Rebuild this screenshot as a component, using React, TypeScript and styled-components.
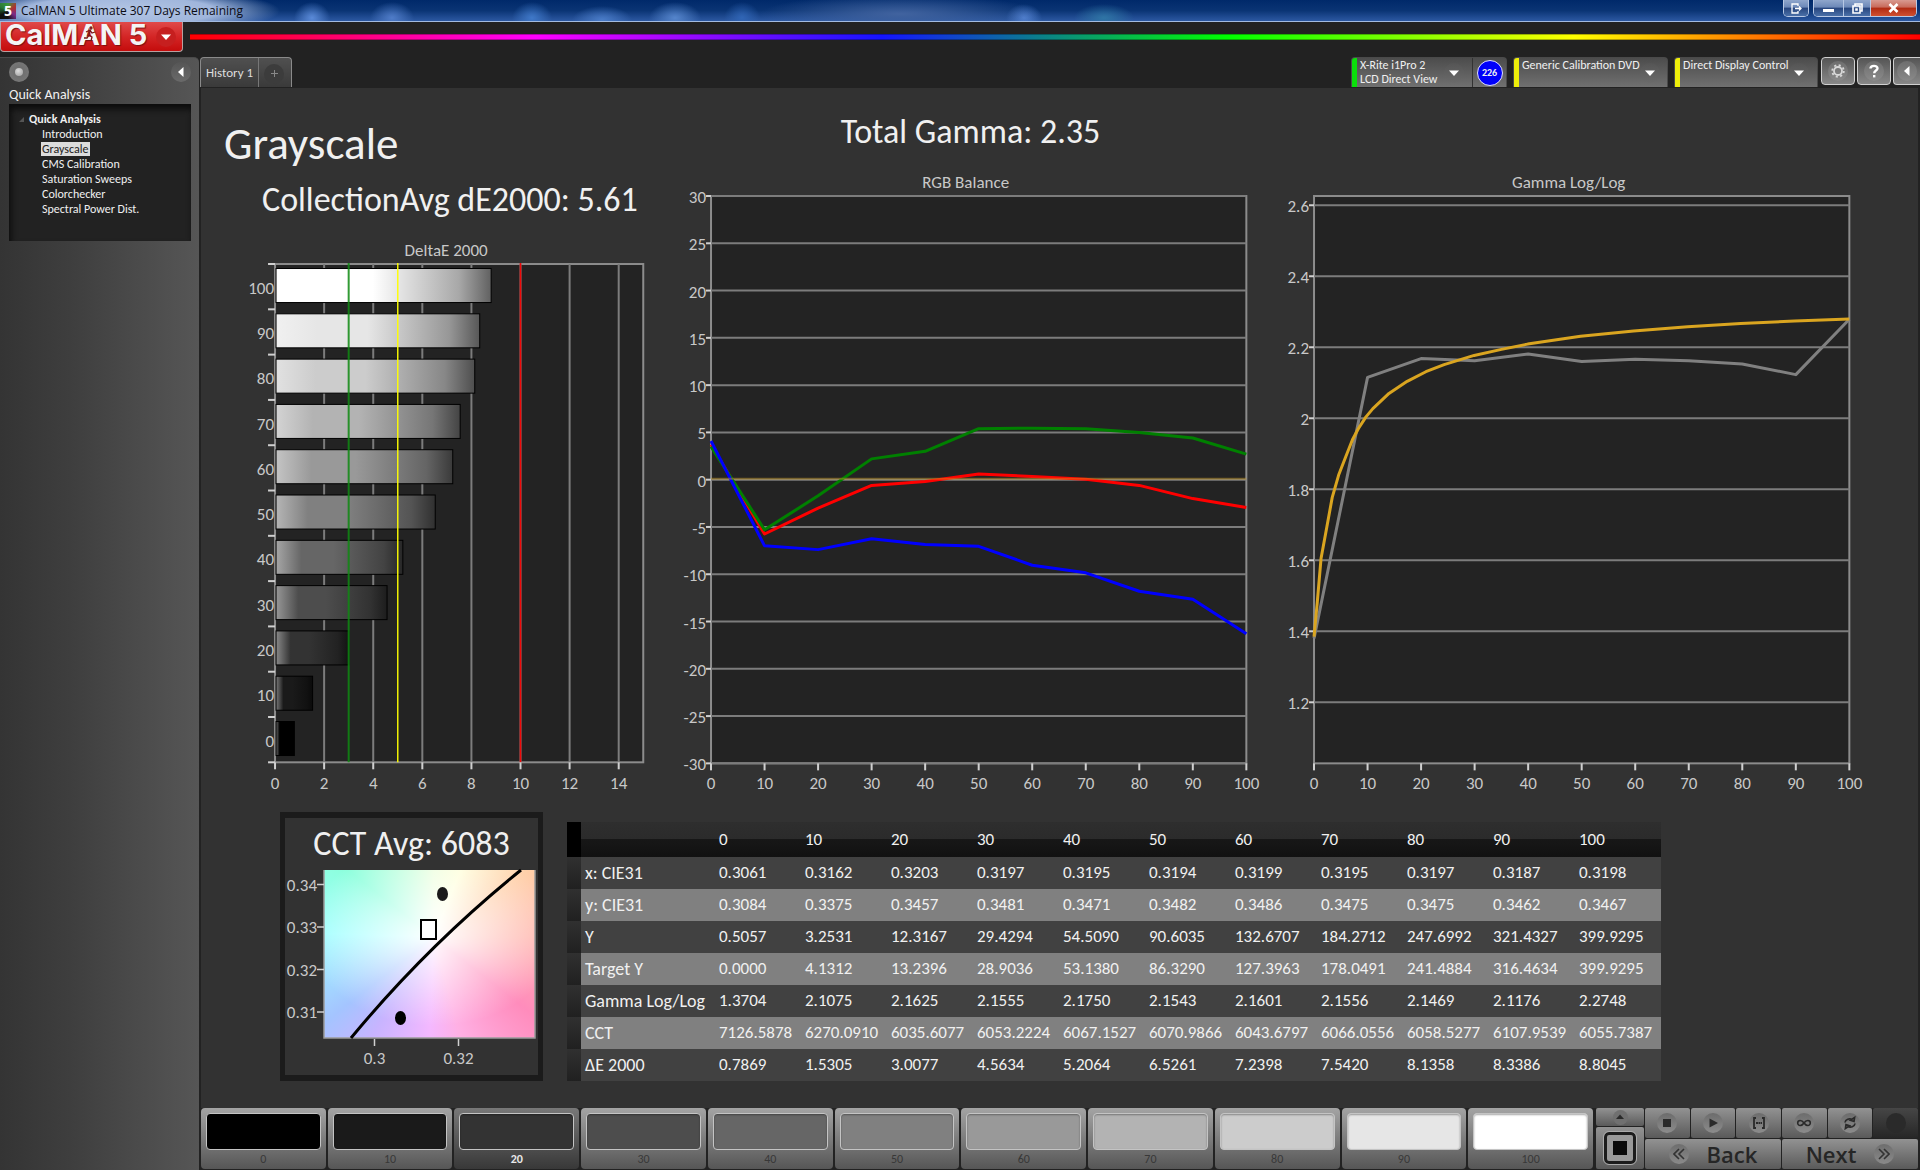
import React from "react";
import styled, { createGlobalStyle, css } from "styled-components";

const GlobalStyle = createGlobalStyle`
  *, *::before, *::after { box-sizing: border-box; }
  body {
    margin: 0;
    background: #222;
    color: #f0f0f0;
    font-family: Carlito, Calibri, Lato, "Open Sans", sans-serif;
    font-size: 12px;
  }
  button { font: inherit; color: inherit; border: 0; padding: 0; margin: 0; background: none; cursor: pointer; }
  h1, h2, p, figure, ul { margin: 0; padding: 0; font-weight: 400; }
  ul { list-style: none; }
  svg { display: block; }
`;

/* ---------- shell ---------- */

const Shell = styled.div`
  min-height: 100vh;
  display: grid;
  grid-template-rows: 22px 35px 1fr;
  background: #222;
  overflow: hidden;
`;

const TitleBar = styled.header`
  display: flex;
  align-items: flex-start;
  justify-content: space-between;
  border-bottom: 1px solid #a3bbe0;
  background:
    radial-gradient(ellipse 160px 24px at 120px 11px, #b4c6e4 0%, #a0b6dc 60%, transparent 100%),
    radial-gradient(ellipse 18px 16px at 312px 18px, #5a8ad8 0%, transparent 100%),
    radial-gradient(ellipse 22px 16px at 392px 18px, #4f7cc8 0%, transparent 100%),
    radial-gradient(ellipse 20px 16px at 532px 18px, #3f78c8 0%, transparent 100%),
    radial-gradient(ellipse 30px 14px at 602px 20px, #4a7cc8 0%, transparent 100%),
    radial-gradient(ellipse 26px 16px at 675px 18px, #5585cc 0%, transparent 100%),
    radial-gradient(ellipse 18px 16px at 742px 18px, #3065b5 0%, transparent 100%),
    radial-gradient(ellipse 140px 20px at 900px 14px, #41639f 0%, transparent 100%),
    radial-gradient(ellipse 18px 14px at 1024px 18px, #5080d0 0%, transparent 100%),
    radial-gradient(ellipse 30px 14px at 1104px 18px, #2f75a5 0%, transparent 100%),
    linear-gradient(#00296a, #0a3474 50%, #2c58a2);
`;

const AppTitle = styled.div`
  display: flex;
  align-items: center;
  gap: 5px;
  height: 21px;
  color: #0b0b14;
  font-family: "Open Sans", sans-serif;
  font-size: 12px;
`;

const AppBadge = styled.span`
  display: grid;
  place-items: center;
  width: 16px;
  height: 16px;
  color: #fff;
  font-size: 14px;
  line-height: 16px;
  font-weight: 700;
  background: conic-gradient(#3c9a3c, #b03030, #7a2a8a, #101010, #101010, #2a7a3a, #3c9a3c);
`;

const WindowButtons = styled.div`
  display: flex;
  gap: 4px;
  padding-right: 3px;
`;

const WindowGroup = styled.div`
  display: flex;
  height: 17px;
  border: 1px solid #b8c8e4;
  border-top: 0;
  border-radius: 0 0 5px 5px;
  overflow: hidden;
`;

const WindowButton = styled.button<{ $w: number; $close?: boolean }>`
  display: grid;
  place-items: center;
  width: ${(p) => p.$w}px;
  background: ${(p) =>
    p.$close
      ? "linear-gradient(#d89a90, #c86a5a 45%, #b02a12 50%, #d05030)"
      : "linear-gradient(#8fa6cc, #6c88b8 45%, #27457e 50%, #4a70a8)"};
  & + & { border-left: 1px solid #b8c8e4; }
`;

const BrandRow = styled.div`
  display: flex;
  align-items: flex-start;
  gap: 7px;
`;

const Brand = styled.button`
  position: relative;
  display: flex;
  align-items: center;
  justify-content: space-between;
  width: 183px;
  height: 30px;
  padding: 0 6px 0 4px;
  border: 1px solid #b9a0a0;
  border-top: 0;
  border-radius: 0 0 4px 4px;
  background: linear-gradient(#e04a4a, #d42626 50%, #c40c0c);
`;

const BrandName = styled.span`
  color: #f4f4f4;
  font-family: Inter, "Open Sans", sans-serif;
  font-size: 29px;
  line-height: 26px;
  font-weight: 700;
  padding-bottom: 4px;
  text-shadow: 1px 1px 1px #7a1010;
`;

const BrandFigure = styled.svg`
  position: absolute;
  left: 83px;
  top: 4px;
`;

const Spectrum = styled.div`
  flex: 1;
  height: 6px;
  margin-top: 12px;
  border: solid rgba(0, 0, 0, 0.3);
  border-width: 1px 0;
  background: linear-gradient(90deg, #f00, #f0f 20%, #1414ff 40%, #0f0 60%, #ff0 80%, #f00);
`;

const Disc = styled.span<{ $size: number; $bg?: string }>`
  display: grid;
  place-items: center;
  flex: none;
  width: ${(p) => p.$size}px;
  height: ${(p) => p.$size}px;
  border-radius: 50%;
  background: ${(p) => p.$bg ?? "linear-gradient(#6e6e6e, #8a8a8a)"};
`;

const Body = styled.div`
  display: grid;
  grid-template-columns: 199px minmax(0, 1fr);
  gap: 1px;
`;

/* ---------- sidebar ---------- */

const Sidebar = styled.aside`
  padding: 4px 8px 0 9px;
  border-top: 1px solid #4a4a4a;
  border-radius: 0 5px 0 0;
  background: linear-gradient(90deg, #343434, #3e3e3e 35%, #565656);
`;

const SidebarTools = styled.div`
  display: flex;
  justify-content: space-between;
`;

const SidebarTitle = styled.p`
  padding-top: 4px;
  font-size: 14px;
  line-height: 18px;
`;

const Tree = styled.nav`
  height: 137px;
  padding: 7px 10px;
  background: #222;
  box-shadow: inset 2px 5px 6px #0c0c0c;
`;

const TreeRoot = styled.div`
  display: flex;
  align-items: center;
  gap: 5px;
  height: 16px;
  font-weight: 700;
`;

const TreeItem = styled.li`
  height: 15px;
  padding-left: 22px;
  line-height: 14px;
`;

const TreeLink = styled.a<{ $active?: boolean }>`
  display: inline-block;
  padding: 0 1px;
  color: ${(p) => (p.$active ? "#222" : "#f0f0f0")};
  background: ${(p) => (p.$active ? "#dcdcdc" : "none")};
  text-decoration: none;
`;

/* ---------- workspace header ---------- */

const Workspace = styled.div`
  display: flex;
  flex-direction: column;
  min-width: 0;
`;

const TopRow = styled.div`
  display: flex;
  justify-content: space-between;
  height: 31px;
`;

const Tabs = styled.div`
  display: flex;
  height: 30px;
  border: 1px solid #8a8a8a;
  border-bottom: 0;
  border-radius: 4px 4px 0 0;
  background: linear-gradient(#505050, #3a3a3a);
`;

const Tab = styled.button`
  display: flex;
  align-items: center;
  padding: 0 5px;
  color: #ddd;
  font-size: 13px;
  & + & { padding: 2px 7px 0 5px; border-left: 1px solid #777; }
`;

const Devices = styled.div`
  display: flex;
  overflow: hidden;
`;

const Device = styled.div<{ $w: number }>`
  display: flex;
  width: ${(p) => p.$w}px;
  height: 30px;
  margin-right: 6px;
  border: 1px solid #4a4a4a;
  border-bottom: 0;
  border-radius: 4px 4px 0 0;
  overflow: hidden;
  background: linear-gradient(#4c4c4c, #707070);
`;

const DeviceButton = styled.button<{ $stripe: string }>`
  display: flex;
  flex: 1;
  align-items: flex-start;
  justify-content: space-between;
  padding: 0 8px 0 3px;
  border-left: 5px solid ${(p) => p.$stripe};
  text-align: left;
  line-height: 14px;
  white-space: pre;
  ${Disc} { margin-top: 5px; }
`;

const MeterId = styled.button`
  display: grid;
  place-items: center;
  width: 34px;
  border-left: 1px solid #333;
`;

const MeterBadge = styled.span`
  display: grid;
  place-items: center;
  width: 26px;
  height: 26px;
  border: 1px solid #e0e0ff;
  border-radius: 50%;
  background: #0000fa;
  font-size: 10px;
  font-weight: 700;
`;

const SquareButton = styled.button<{ $cut?: boolean }>`
  display: grid;
  place-items: center;
  width: ${(p) => (p.$cut ? 27 : 34)}px;
  height: 28px;
  border: 1px solid #d0d0d0;
  border-radius: ${(p) => (p.$cut ? "4px 0 0 4px" : "4px")};
  ${(p) => p.$cut && css`border-right: 0;`}
  background: linear-gradient(#555, #888);
`;

const ToolButtons = styled.div`
  display: flex;
  gap: 2px;
  margin-left: -3px;
`;

/* ---------- dashboard ---------- */

const Dashboard = styled.main`
  flex: 1;
  display: flex;
  flex-direction: column;
  margin-right: 2px;
  background: #323232;
  border-left: 1px solid #222;
`;

const Charts = styled.section`
  display: grid;
  grid-template-columns: 436fr 584fr 584fr;
  gap: 18px;
  padding: 16px 53px 0 23px;
`;

const Headline = styled.h1`
  margin-top: 12px;
  font-size: 45px;
  line-height: 56px;
`;

const Stat = styled.h2<{ $indent?: number; $center?: boolean }>`
  padding-left: ${(p) => p.$indent ?? 0}px;
  font-size: 34px;
  line-height: 56px;
  text-align: ${(p) => (p.$center ? "center" : "left")};
  white-space: nowrap;
`;

const PanelStat = styled(Stat)`
  line-height: 52px;
`;

const GraphFigure = styled.figure<{ $top: number }>`
  padding-top: ${(p) => p.$top}px;
`;

const Graph = styled.svg`
  width: 100%;
  height: auto;
  overflow: visible;
  font-size: 17px;
  fill: #c8c8c8;
`;

const Readings = styled.section`
  display: grid;
  grid-template-columns: 263px minmax(0, 1094px);
  gap: 24px;
  align-items: end;
  padding: 12px 24px 26px 79px;
`;

const CctPanel = styled.section`
  border: solid #1b1b1b;
  border-width: 6px 5px;
`;

const CieField = styled.div`
  width: 100%;
  height: 100%;
  background:
    radial-gradient(ellipse 60% 55% at 52% 38%, rgba(255, 255, 255, 1) 0%, rgba(255, 255, 255, 0.5) 50%, transparent 100%),
    conic-gradient(from 0deg at 52% 40%,
      #ecffdc 0deg, #ffffd8 22deg, #ffcfa8 55deg, #ffb4ac 90deg, #ff8cbc 128deg,
      #ffb0e4 165deg, #f4b8ff 182deg, #c8b4ff 212deg, #a4c4ff 232deg, #a0ffff 272deg, #8cffdc 308deg, #ecffdc 360deg);
`;

const DataTable = styled.table`
  width: 100%;
  table-layout: fixed;
  border-collapse: collapse;
  font-size: 17px;
  line-height: 20px;
  th, td { padding: 0 0 0 4px; font-weight: 400; text-align: left; white-space: nowrap; }
  thead tr { height: 35px; background: linear-gradient(#2e2e2e 0, #2b2b2b 48%, #171717 50%, #111); }
  tbody tr { height: 32px; background: #414141; }
  tbody tr:nth-child(even) { background: #808080; }
  tbody th { font-size: 18px; }
  td:first-child { background: linear-gradient(#303030, #202020); }
  thead td:first-child { background: #000; }
`;

/* ---------- bottom strip ---------- */

const Strip = styled.footer`
  display: flex;
  gap: 1px;
  height: 62px;
  margin-top: auto;
  padding-bottom: 1px;
  background: #222;
`;

const Swatches = styled.div`
  flex: 1;
  display: grid;
  grid-template-columns: repeat(11, 1fr);
  gap: 2px;
  padding-right: 2px;
`;

const SwatchButton = styled.button<{ $active?: boolean }>`
  display: flex;
  flex-direction: column;
  padding: 5px 5px 0;
  border-radius: 4px;
  color: ${(p) => (p.$active ? "#e8e8e8" : "#383838")};
  font-weight: ${(p) => (p.$active ? 700 : 400)};
  background: ${(p) => (p.$active ? "linear-gradient(#787878, #383838)" : "linear-gradient(#a4a4a4, #565656)")};
`;

const SwatchColor = styled.span<{ $level: number }>`
  display: block;
  width: 100%;
  height: 37px;
  border: 1px solid #c4c4c4;
  border-radius: 4px;
  background: rgb(${(p) => p.$level}, ${(p) => p.$level}, ${(p) => p.$level});
  box-shadow: inset 0 1px 2px rgba(0, 0, 0, 0.35);
`;

const SwatchLabel = styled.span`
  width: 100%;
  line-height: 18px;
  text-align: center;
`;

const PatternColumn = styled.div`
  display: grid;
  grid-template-rows: 18px 1fr;
  gap: 1px;
  width: 48px;
`;

const MetalButton = styled.button<{ $dark?: boolean }>`
  display: flex;
  align-items: center;
  justify-content: center;
  border-radius: 2px;
  background: ${(p) => (p.$dark ? "linear-gradient(#464646, #262626)" : "linear-gradient(#929292, #5a5a5a)")};
`;

const PatternFrame = styled.span`
  display: grid;
  place-items: center;
  width: 32px;
  height: 32px;
  border: 3px solid #1c1c1c;
  border-radius: 5px;
  outline: 1px solid #aaa;
  background: #999;
`;

const Controls = styled.div`
  display: grid;
  grid-template-rows: 30px 1fr;
  gap: 1px;
  width: 273px;
`;

const ControlRow = styled.div<{ $n: number }>`
  display: grid;
  grid-template-columns: repeat(${(p) => p.$n}, 1fr);
  gap: 1px;
`;

const StepButton = styled(MetalButton)`
  gap: 18px;
  color: #262626;
  font-family: "Open Sans", "Noto Sans", sans-serif;
  font-size: 22px;
  line-height: 28px;
  font-weight: 600;
`;

/* ---------- data ---------- */

const LEVELS = [0, 10, 20, 30, 40, 50, 60, 70, 80, 90, 100];

const ROWS: [string, string[]][] = [
  ["x: CIE31", ["0.3061", "0.3162", "0.3203", "0.3197", "0.3195", "0.3194", "0.3199", "0.3195", "0.3197", "0.3187", "0.3198"]],
  ["y: CIE31", ["0.3084", "0.3375", "0.3457", "0.3481", "0.3471", "0.3482", "0.3486", "0.3475", "0.3475", "0.3462", "0.3467"]],
  ["Y", ["0.5057", "3.2531", "12.3167", "29.4294", "54.5090", "90.6035", "132.6707", "184.2712", "247.6992", "321.4327", "399.9295"]],
  ["Target Y", ["0.0000", "4.1312", "13.2396", "28.9036", "53.1380", "86.3290", "127.3963", "178.0491", "241.4884", "316.4634", "399.9295"]],
  ["Gamma Log/Log", ["1.3704", "2.1075", "2.1625", "2.1555", "2.1750", "2.1543", "2.1601", "2.1556", "2.1469", "2.1176", "2.2748"]],
  ["CCT", ["7126.5878", "6270.0910", "6035.6077", "6053.2224", "6067.1527", "6070.9866", "6043.6797", "6066.0556", "6058.5277", "6107.9539", "6055.7387"]],
  ["ΔE 2000", ["0.7869", "1.5305", "3.0077", "4.5634", "5.2064", "6.5261", "7.2398", "7.5420", "8.1358", "8.3386", "8.8045"]],
];

const DELTA_E = ROWS[6][1].map(Number);

const RED = [3.7, -5.75, -3, -0.6, -0.2, 0.6, 0.35, 0.05, -0.6, -2, -2.95];
const GREEN = [3.5, -5.3, -1.7, 2.2, 3, 5.4, 5.45, 5.4, 5, 4.4, 2.7];
const BLUE = [4.1, -7, -7.4, -6.25, -6.85, -7.05, -9.05, -9.85, -11.8, -12.65, -16.3];

const GAMMA = [1.38, 2.115, 2.168, 2.162, 2.181, 2.16, 2.166, 2.162, 2.153, 2.123, 2.279];
const GAMMA_TARGET: [number, number][] = [
  [0, 1.385], [0.6, 1.48], [1.3, 1.605], [2.4, 1.694], [3.4, 1.777], [4.6, 1.84], [5.9, 1.891], [7.2, 1.94],
  [8.3, 1.971], [9.7, 2.004], [11, 2.027], [14, 2.07], [17.4, 2.104], [20.9, 2.131], [24.3, 2.151], [29.9, 2.177],
  [35, 2.194], [39.9, 2.209], [49.8, 2.231], [59.7, 2.246], [69.8, 2.258], [79.7, 2.267], [89.8, 2.274], [100, 2.28],
];

const gray = (v: number) => `rgb(${Math.round(v)},${Math.round(v)},${Math.round(v)})`;
const points = (list: [number, number][]) => list.map(([x, y]) => `${x.toFixed(1)},${y.toFixed(1)}`).join(" ");

/* ---------- charts ---------- */

function DeltaChart() {
  const left = 51, right = 419, top = 28, bottom = 526;
  const sx = (v: number) => left + (v * (right - left)) / 15;
  const band = (bottom - top) / 11;
  return (
    <Graph viewBox="0 0 436 564" role="img" aria-label="DeltaE 2000">
      <defs>
        {LEVELS.map((l) => {
          const b = (l / 100) * 255;
          return (
            <linearGradient key={l} id={`bar${l}`}>
              <stop offset="0" stopColor={gray(b + (255 - b) * 0.42)} />
              <stop offset="0.2" stopColor={gray(b)} />
              <stop offset="0.45" stopColor={gray(b)} />
              <stop offset="0.85" stopColor={gray(b * 0.66)} />
              <stop offset="1" stopColor={gray(b * 0.38)} />
            </linearGradient>
          );
        })}
      </defs>
      <text x="222" y="20" textAnchor="middle">DeltaE 2000</text>
      <rect x={left} y={top} width={right - left} height={bottom - top} fill="#232323" stroke="#8c8c8c" strokeWidth="2" />
      {[2, 4, 6, 8, 10, 12, 14].map((v) => (
        <line key={v} x1={sx(v)} x2={sx(v)} y1={top} y2={bottom} stroke="#7c7c7c" strokeWidth="2" />
      ))}
      {LEVELS.map((l, i) => {
        const y = bottom - (i + 1) * band;
        return (
          <g key={l}>
            <rect x={left + 1} y={y + 4.5} width={sx(DELTA_E[i]) - left - 1} height="34" fill={`url(#bar${l})`} stroke="#000" />
            <text x={left - 1} y={y + band / 2 + 7} textAnchor="end">{l}</text>
          </g>
        );
      })}
      {Array.from({ length: 12 }, (_, i) => (
        <line key={i} x1={left - 7} x2={left} y1={top + i * band} y2={top + i * band} stroke="#d0d0d0" strokeWidth="2" />
      ))}
      <line x1={sx(3)} x2={sx(3)} y1={top - 1} y2={bottom} stroke="#0f8a12" strokeWidth="2" opacity="0.85" />
      <line x1={sx(5)} x2={sx(5)} y1={top - 1} y2={bottom} stroke="#ff0" strokeWidth="1.4" />
      <line x1={sx(10)} x2={sx(10)} y1={top - 1} y2={bottom} stroke="#f00808" strokeWidth="1.6" />
      {[0, 2, 4, 6, 8, 10, 12, 14].map((v) => (
        <g key={v}>
          <line x1={sx(v)} x2={sx(v)} y1={bottom} y2={bottom + 7} stroke="#d0d0d0" strokeWidth="2" />
          <text x={sx(v)} y={bottom + 27} textAnchor="middle">{v}</text>
        </g>
      ))}
    </Graph>
  );
}

interface LineChartProps {
  title: string;
  min: number;
  max: number;
  ticks: number[];
  series: { color: string; data: [number, number][] }[];
  baseline?: boolean;
}

function LineChart({ title, min, max, ticks, series, baseline }: LineChartProps) {
  const left = 33, right = 568, top = 24, bottom = 591;
  const sx = (v: number) => left + (v * (right - left)) / 100;
  const sy = (v: number) => bottom - ((v - min) * (bottom - top)) / (max - min);
  return (
    <Graph viewBox="0 0 584 628" role="img" aria-label={title}>
      <text x={(left + right) / 2 - 13} y="16" textAnchor="middle">{title}</text>
      <rect x={left} y={top} width={right - left} height={bottom - top} fill="#232323" stroke="#8c8c8c" strokeWidth="2" />
      {ticks.map((v) => (
        <g key={v}>
          <line x1={left} x2={right} y1={sy(v)} y2={sy(v)} stroke="#7c7c7c" strokeWidth="2" />
          <line x1={left - 5} x2={left} y1={sy(v)} y2={sy(v)} stroke="#d0d0d0" strokeWidth="2" />
          <text x={left - 5} y={sy(v) + 7} textAnchor="end">{v}</text>
        </g>
      ))}
      {LEVELS.map((v) => (
        <g key={v}>
          <line x1={sx(v)} x2={sx(v)} y1={bottom} y2={bottom + 7} stroke="#d0d0d0" strokeWidth="2" />
          <text x={sx(v)} y={bottom + 26} textAnchor="middle">{v}</text>
        </g>
      ))}
      {series.map((s) => (
        <polyline
          key={s.color}
          points={points(s.data.map(([x, y]) => [sx(x), sy(y)] as [number, number]))}
          fill="none"
          stroke={s.color}
          strokeWidth="3"
          strokeLinejoin="round"
        />
      ))}
      {baseline && <line x1={left} x2={right} y1={sy(0) - 1} y2={sy(0) - 1} stroke="#daa520" strokeWidth="2" opacity="0.4" />}
    </Graph>
  );
}

const byLevel = (values: number[]) => values.map((v, i) => [LEVELS[i], v] as [number, number]);

function CctChart() {
  return (
    <Graph viewBox="0 0 253 205" role="img" aria-label="CCT chromaticity">
      <foreignObject x="39" y="0" width="211" height="168">
        <CieField />
      </foreignObject>
      <path d="M39 0V168H250V0" fill="none" stroke="#9a9a9a" strokeWidth="1.5" />
      <path d="M66 168Q142 76 236 0" fill="none" stroke="#000" strokeWidth="3" />
      <ellipse cx="157.5" cy="24" rx="5.5" ry="7" fill="#1a1a1a" />
      <ellipse cx="115.5" cy="148" rx="5.5" ry="7" fill="#000" />
      <rect x="136" y="50" width="15" height="19" fill="#fff" stroke="#000" strokeWidth="2" />
      {[["0.34", 14.5], ["0.33", 57], ["0.32", 99.5], ["0.31", 142]].map(([t, y]) => (
        <g key={t}>
          <line x1="32" x2="39" y1={y} y2={y} stroke="#d0d0d0" strokeWidth="1.5" />
          <text x="32" y={Number(y) + 6} textAnchor="end">{t}</text>
        </g>
      ))}
      {[["0.3", 89.5], ["0.32", 173.5]].map(([t, x]) => (
        <g key={t}>
          <line x1={x} x2={x} y1="169" y2="176" stroke="#d0d0d0" strokeWidth="1.5" />
          <text x={x} y="194" textAnchor="middle">{t}</text>
        </g>
      ))}
    </Graph>
  );
}

/* ---------- icons ---------- */

const Caret = ({ dir = "down", size = 10, color = "#fff" }: { dir?: "down" | "left" | "up"; size?: number; color?: string }) => (
  <svg width={size} height={size} viewBox="0 0 10 10" fill={color} aria-hidden="true">
    <path d={dir === "down" ? "M0 2.5H10L5 8Z" : dir === "up" ? "M0 7.5H10L5 2Z" : "M7.5 0V10L2 5Z"} />
  </svg>
);

const GearIcon = () => (
  <svg width="14" height="14" viewBox="0 0 14 14" fill="none" stroke="#d8d8d8" aria-hidden="true">
    <circle cx="7" cy="7" r="4" strokeWidth="1.8" />
    <circle cx="7" cy="7" r="5.8" strokeWidth="1.8" strokeDasharray="2.1 2.45" />
  </svg>
);

const HelpIcon = () => (
  <svg width="12" height="14" viewBox="0 0 12 14" fill="none" stroke="#fff" strokeWidth="2.4" aria-hidden="true">
    <path d="M2.5 4.5C2.5 1 9.5 1 9.5 4.3C9.5 6.6 6.2 6.4 6.2 9.2" />
    <path d="M6.2 11V13.4" />
  </svg>
);

const INK = "#2a2a2a";
const TRANSPORT: [string, React.ReactNode][] = [
  ["Stop", <rect x="4" y="4" width="8" height="8" fill={INK} />],
  ["Play", <path d="M4.5 3.5L13 8L4.5 12.5Z" fill={INK} />],
  ["Read series", <path d="M5 3H3V13H5M11 3H13V13H11M5 8H7M7.5 8H9M9.5 8H11" fill="none" stroke={INK} strokeWidth="1.8" />],
  ["Read continuous", <path d="M8 8C6.5 5.8 5.5 5.5 4.2 5.5A2.5 2.5 0 0 0 4.2 10.5C5.5 10.5 6.5 10.2 8 8C9.5 5.8 10.5 5.5 11.8 5.5A2.5 2.5 0 0 1 11.8 10.5C10.5 10.5 9.5 10.2 8 8Z" fill="none" stroke={INK} strokeWidth="1.6" />],
  ["Refresh", <path d="M3 7.5C3.3 4.5 7.5 2.8 10.5 5M13 8.5C12.7 11.5 8.5 13.2 5.5 11M12.6 2.4L12 6.4L8.4 5.2ZM3.4 13.6L4 9.6L7.6 10.8Z" fill="none" stroke={INK} strokeWidth="1.7" />],
];

const Chevrons = ({ flip }: { flip?: boolean }) => (
  <svg width="12" height="12" viewBox="0 0 12 12" fill="none" stroke="#333" strokeWidth="1.6" aria-hidden="true">
    <path d={flip ? "M1 1L6 6L1 11M6 1L11 6L6 11" : "M6 1L1 6L6 11M11 1L6 6L11 11"} />
  </svg>
);

/* ---------- page ---------- */

const PAGES = ["Introduction", "Grayscale", "CMS Calibration", "Saturation Sweeps", "Colorchecker", "Spectral Power Dist."];
const DISC_DARK = "linear-gradient(#555, #6a6a6a)";

export default function App() {
  return (
    <Shell>
      <GlobalStyle />
      <TitleBar>
        <AppTitle>
          <AppBadge>5</AppBadge>
          CalMAN 5 Ultimate 307 Days Remaining
        </AppTitle>
        <WindowButtons>
          <WindowGroup>
            <WindowButton $w={24} aria-label="Undock">
              <svg width="11" height="11" viewBox="0 0 11 11" fill="none" stroke="#fff" strokeWidth="1.3">
                <path d="M7 3V1H1V10H7V8M4 5.500H10M8 3.500L10 5.500L8 7.500" />
              </svg>
            </WindowButton>
          </WindowGroup>
          <WindowGroup>
            <WindowButton $w={29} aria-label="Minimize">
              <svg width="11" height="11" viewBox="0 0 11 11"><rect x="0" y="6" width="11" height="3" fill="#fff" /></svg>
            </WindowButton>
            <WindowButton $w={27} aria-label="Restore">
              <svg width="11" height="11" viewBox="0 0 11 11" fill="none" stroke="#fff" strokeWidth="1.6">
                <path d="M3 3V1H10V8H8M1 3H8V10H1ZM4 6H5V7H4Z" />
              </svg>
            </WindowButton>
            <WindowButton $w={46} $close aria-label="Close">
              <svg width="11" height="10" viewBox="0 0 11 10" stroke="#fff" strokeWidth="2.6"><path d="M1.500 1L9.500 9M9.500 1L1.500 9" /></svg>
            </WindowButton>
          </WindowGroup>
        </WindowButtons>
      </TitleBar>

      <BrandRow>
        <Brand>
          <BrandName>CalMAN 5</BrandName>
          <BrandFigure width="12" height="16" viewBox="0 0 12 16" fill="none" stroke="#7a1414" strokeWidth="1.3" aria-hidden="true">
            <circle cx="7" cy="2" r="1" />
            <path d="M2 6L6 4L8 7L11 6M6 5L5 9L8 11L7 15M5 9L3 12L0 12" />
          </BrandFigure>
          <Disc $size={20} $bg="#c61f1f"><Caret /></Disc>
        </Brand>
        <Spectrum />
      </BrandRow>

      <Body>
        <Sidebar>
          <SidebarTools>
            <button aria-label="Record">
              <Disc $size={20} $bg="radial-gradient(#6a6a6a, #7c7c7c)">
                <Disc $size={8} $bg="radial-gradient(circle at 40% 35%, #ddd, #999)" />
              </Disc>
            </button>
            <button aria-label="Collapse sidebar"><Disc $size={20} $bg={DISC_DARK}><Caret dir="left" /></Disc></button>
          </SidebarTools>
          <SidebarTitle>Quick Analysis</SidebarTitle>
          <Tree>
            <TreeRoot>
              <svg width="5" height="5" viewBox="0 0 5 5" fill="#555" aria-hidden="true"><path d="M5 0V5H0Z" /></svg>
              Quick Analysis
            </TreeRoot>
            <ul>
              {PAGES.map((p) => (
                <TreeItem key={p}><TreeLink href="#" $active={p === "Grayscale"}>{p}</TreeLink></TreeItem>
              ))}
            </ul>
          </Tree>
        </Sidebar>

        <Workspace>
          <TopRow>
            <Tabs>
              <Tab>History 1</Tab>
              <Tab aria-label="Add history">
                <Disc $size={20} $bg="#3c3c3c">
                  <svg width="7" height="7" viewBox="0 0 7 7" stroke="#888"><path d="M3.500 0V7M0 3.500H7" /></svg>
                </Disc>
              </Tab>
            </Tabs>
            <Devices>
              <Device $w={156}>
                <DeviceButton $stripe="#0be00b">{"X-Rite i1Pro 2\nLCD Direct View"}<Disc $size={20} $bg={DISC_DARK}><Caret /></Disc></DeviceButton>
                <MeterId><MeterBadge>226</MeterBadge></MeterId>
              </Device>
              <Device $w={155}>
                <DeviceButton $stripe="#eeee0a">Generic Calibration DVD<Disc $size={20} $bg={DISC_DARK}><Caret /></Disc></DeviceButton>
              </Device>
              <Device $w={144}>
                <DeviceButton $stripe="#eeee0a">Direct Display Control<Disc $size={20} $bg={DISC_DARK}><Caret /></Disc></DeviceButton>
              </Device>
              <ToolButtons>
                <SquareButton aria-label="Settings"><Disc $size={20}><GearIcon /></Disc></SquareButton>
                <SquareButton aria-label="Help"><Disc $size={20}><HelpIcon /></Disc></SquareButton>
                <SquareButton $cut aria-label="Collapse"><Disc $size={20}><Caret dir="left" /></Disc></SquareButton>
              </ToolButtons>
            </Devices>
          </TopRow>

          <Dashboard>
            <Charts>
              <div>
                <Headline>Grayscale</Headline>
                <Stat $indent={38}>CollectionAvg dE2000: 5.61</Stat>
                <GraphFigure $top={8}><DeltaChart /></GraphFigure>
              </div>
              <div>
                <Stat $center>Total Gamma: 2.35</Stat>
                <GraphFigure $top={12}>
                  <LineChart
                    title="RGB Balance"
                    min={-30}
                    max={30}
                    ticks={[30, 25, 20, 15, 10, 5, 0, -5, -10, -15, -20, -25, -30]}
                    series={[
                      { color: "#ff0000", data: byLevel(RED) },
                      { color: "#008000", data: byLevel(GREEN) },
                      { color: "#0000ff", data: byLevel(BLUE) },
                    ]}
                    baseline
                  />
                </GraphFigure>
              </div>
              <GraphFigure $top={68}>
                <LineChart
                  title="Gamma Log/Log"
                  min={1.028}
                  max={2.626}
                  ticks={[2.6, 2.4, 2.2, 2, 1.8, 1.6, 1.4, 1.2]}
                  series={[
                    { color: "#808080", data: byLevel(GAMMA) },
                    { color: "#daa520", data: GAMMA_TARGET },
                  ]}
                />
              </GraphFigure>
            </Charts>

            <Readings>
              <CctPanel>
                <PanelStat $center>CCT Avg: 6083</PanelStat>
                <CctChart />
              </CctPanel>
              <DataTable>
                <colgroup>
                  <col style={{ width: 14 }} />
                  <col style={{ width: 134 }} />
                  {LEVELS.map((l) => <col key={l} />)}
                </colgroup>
                <thead>
                  <tr>
                    <td />
                    <td />
                    {LEVELS.map((l) => <th key={l} scope="col">{l}</th>)}
                  </tr>
                </thead>
                <tbody>
                  {ROWS.map(([name, values]) => (
                    <tr key={name}>
                      <td />
                      <th scope="row">{name}</th>
                      {values.map((v, i) => <td key={i}>{v}</td>)}
                    </tr>
                  ))}
                </tbody>
              </DataTable>
            </Readings>

            <Strip>
              <Swatches>
                {LEVELS.map((l) => (
                  <SwatchButton key={l} $active={l === 20}>
                    <SwatchColor $level={Math.round((l / 100) * 255)} />
                    <SwatchLabel>{l}</SwatchLabel>
                  </SwatchButton>
                ))}
              </Swatches>
              <PatternColumn>
                <MetalButton aria-label="Show patterns"><Disc $size={15} $bg="#707070"><Caret dir="up" size={8} color={INK} /></Disc></MetalButton>
                <MetalButton aria-label="Pattern window">
                  <PatternFrame>
                    <svg width="14" height="14" viewBox="0 0 14 14"><rect width="14" height="14" fill="#0a0a0a" /></svg>
                  </PatternFrame>
                </MetalButton>
              </PatternColumn>
              <Controls>
                <ControlRow $n={6}>
                  {TRANSPORT.map(([name, shape]) => (
                    <MetalButton key={name} aria-label={name}>
                      <Disc $size={20} $bg="linear-gradient(#6c6c6c, #8c8c8c)">
                        <svg width="16" height="16" viewBox="0 0 16 16">{shape}</svg>
                      </Disc>
                    </MetalButton>
                  ))}
                  <MetalButton $dark aria-label="Status"><Disc $size={20} $bg="#2a2a2a" /></MetalButton>
                </ControlRow>
                <ControlRow $n={2}>
                  <StepButton><Disc $size={20}><Chevrons /></Disc>Back</StepButton>
                  <StepButton>Next<Disc $size={20}><Chevrons flip /></Disc></StepButton>
                </ControlRow>
              </Controls>
            </Strip>
          </Dashboard>
        </Workspace>
      </Body>
    </Shell>
  );
}
